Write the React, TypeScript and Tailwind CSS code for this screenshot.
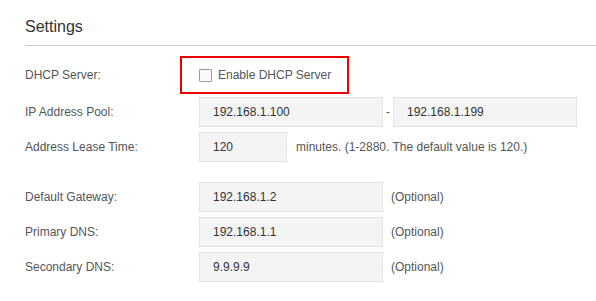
import React from 'react';

const Field = ({ value, width = 'w-[184px]' }: { value: string; width?: string }) => (
  <div className={`${width} h-[30px] flex items-center pl-[13px] bg-[#f4f4f4] border border-[#e3e3e3] text-[12px] text-[#333]`}>
    {value}
  </div>
);

const Row = ({ label, children }: { label: string; children: React.ReactNode }) => (
  <div className="flex items-center h-[30px]">
    <div className="w-[174px] text-[12px] text-[#555]">{label}</div>
    {children}
  </div>
);

const App = () => {
  return <div className="min-h-[301px] bg-white pl-[25px] pt-[15px] text-[12px]" style={{ fontFamily: '"Liberation Sans", Arial, sans-serif' }}>
      <div className="text-[16px] leading-[24px] text-[#333] pb-[6px] border-b border-[#cccccc]">
        Settings
      </div>
      <div className="flex items-center mt-[10px]">
        <div className="w-[155px] text-[12px] text-[#555]">DHCP Server:</div>
        <div className="w-[169px] h-[38px] border-2 border-[#ee0000] flex items-center pl-[17px]">
          <span className="w-[13px] h-[13px] border border-[#999] bg-[#fafafa] rounded-[1px]" />
          <span className="ml-[6px] text-[12px] text-[#555]">Enable DHCP Server</span>
        </div>
      </div>
      <div className="flex flex-col gap-[5px] mt-[3px]">
        <Row label="IP Address Pool:">
          <Field value="192.168.1.100" />
          <span className="w-[10px] text-center text-[#555]">-</span>
          <Field value="192.168.1.199" />
        </Row>
        <Row label="Address Lease Time:">
          <Field value="120" width="w-[88px]" />
          <span className="ml-[9px] text-[#555]">minutes. (1-2880. The default value is 120.)</span>
        </Row>
      </div>
      <div className="flex flex-col gap-[5px] mt-[20px]">
        <Row label="Default Gateway:">
          <Field value="192.168.1.2" />
          <span className="ml-[8px] text-[#555]">(Optional)</span>
        </Row>
        <Row label="Primary DNS:">
          <Field value="192.168.1.1" />
          <span className="ml-[8px] text-[#555]">(Optional)</span>
        </Row>
        <Row label="Secondary DNS:">
          <Field value="9.9.9.9" />
          <span className="ml-[8px] text-[#555]">(Optional)</span>
        </Row>
      </div>
    </div>;
};

export default App;
